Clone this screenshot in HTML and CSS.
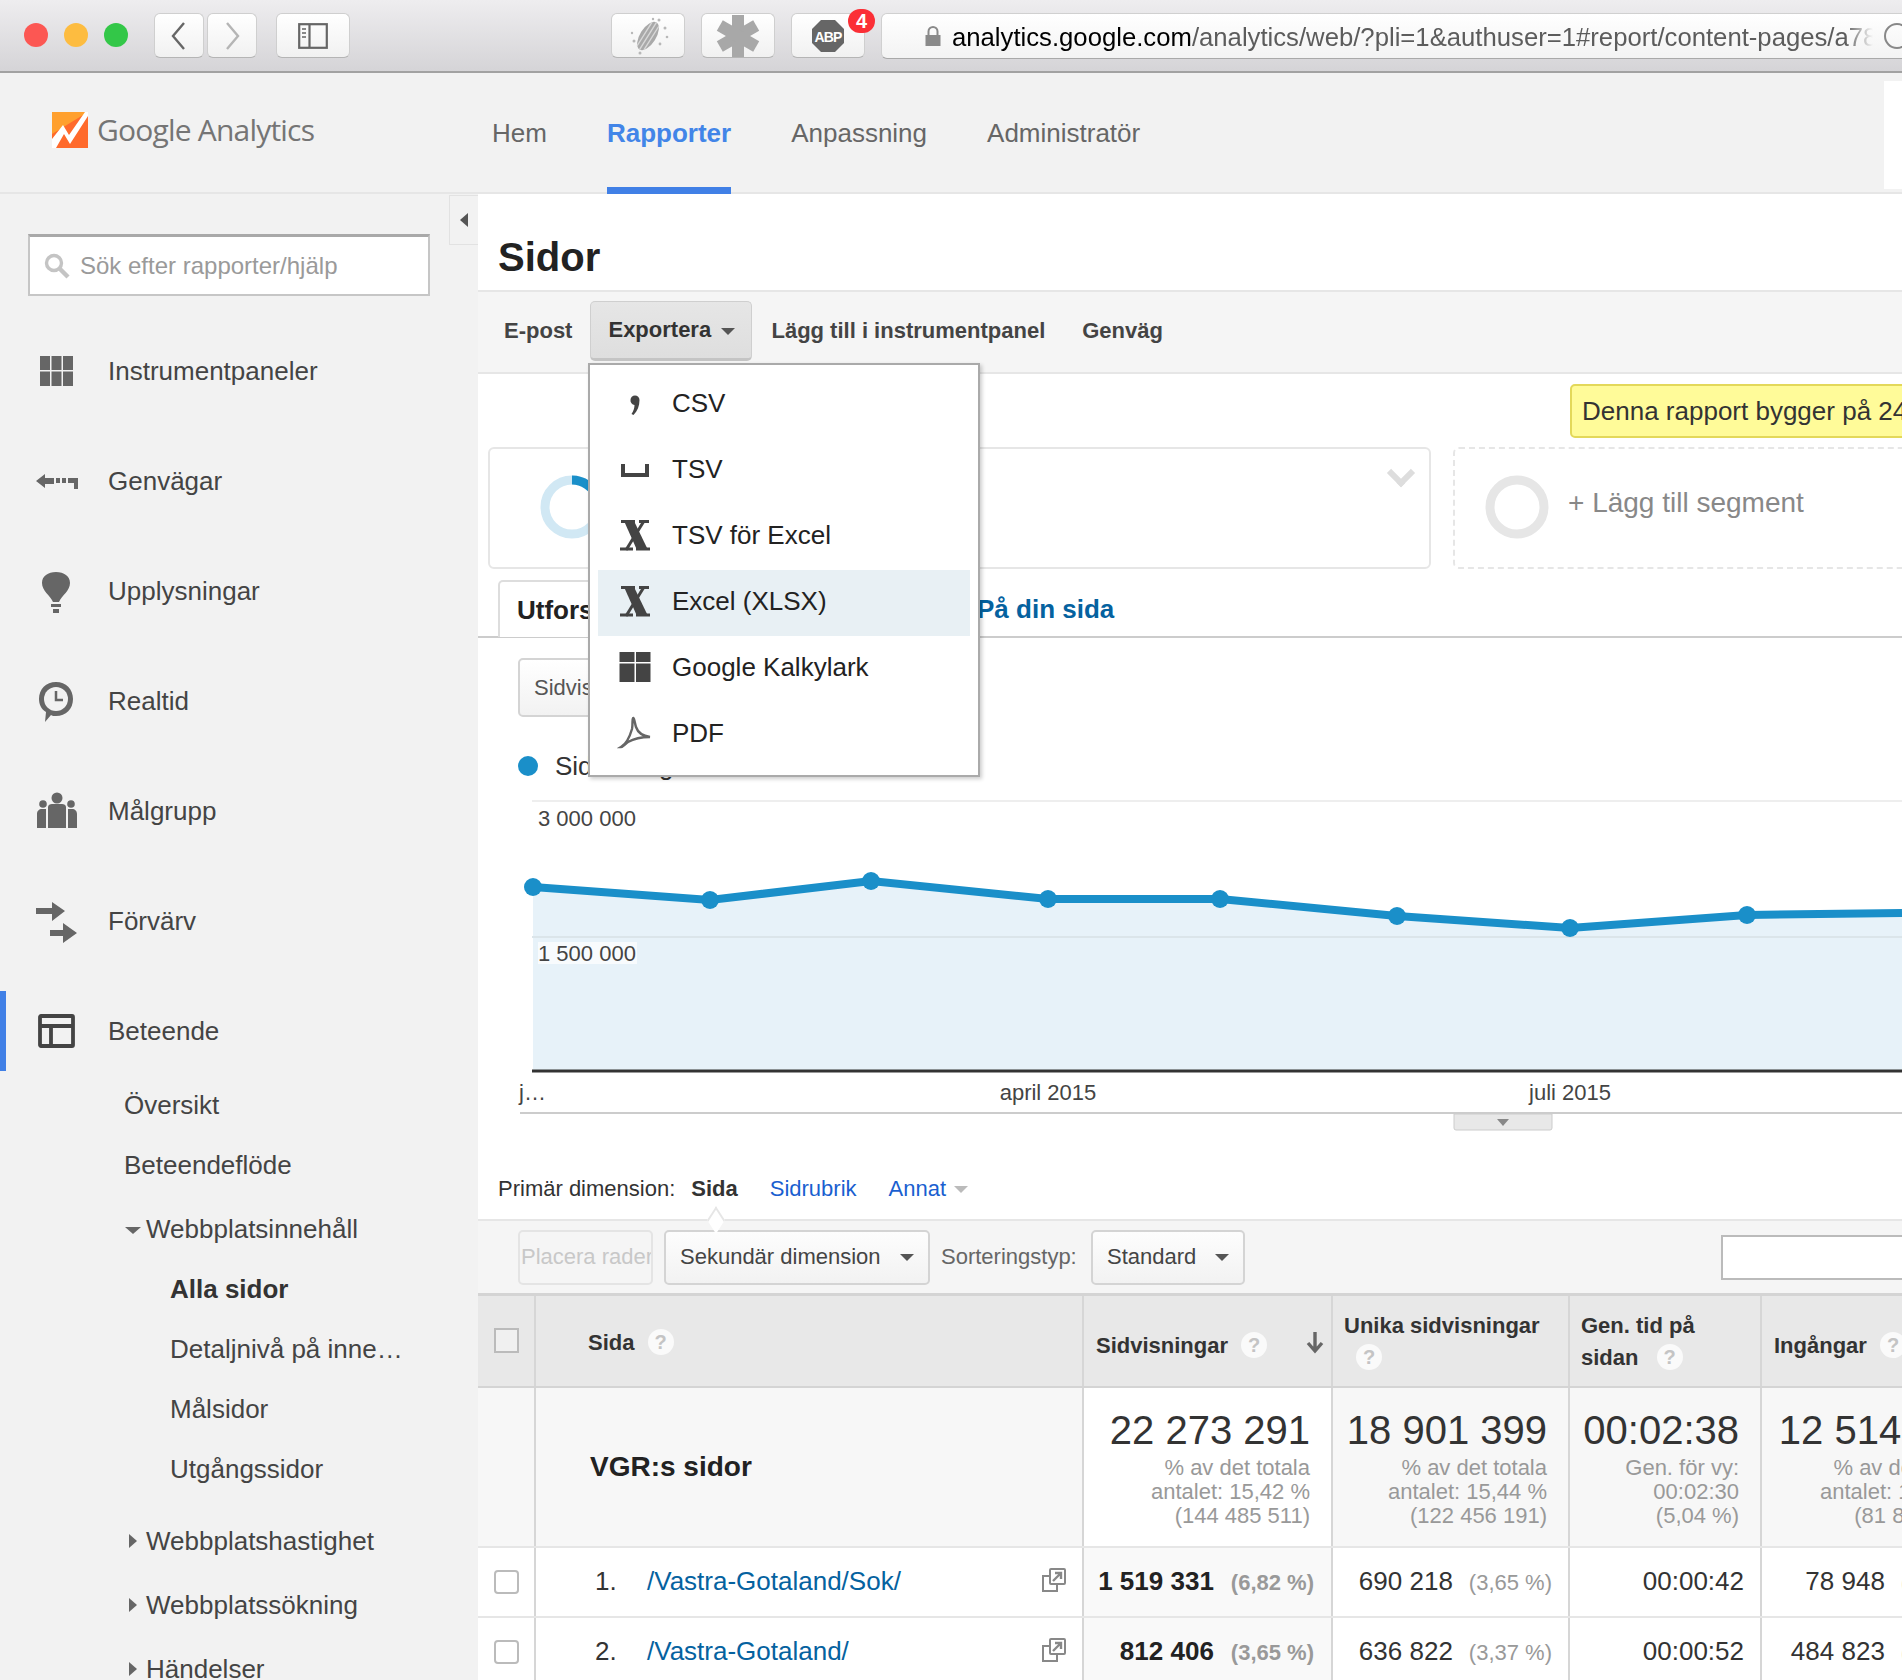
FILE: index.html
```html
<!DOCTYPE html>
<html lang="sv">
<head>
  <meta charset="UTF-8" />
  <title>Sidor - Google Analytics</title>
  <link rel="stylesheet" href="styles.css">
</head>
<body>
  <!-- Browser toolbar -->
  <div class="browser-bar">
    <div class="lights">
      <span class="light red"></span>
      <span class="light yellow"></span>
      <span class="light green"></span>
    </div>
    <div class="nav-btns">
      <div class="tool-btn back"><svg width="20" height="32" viewBox="0 0 20 32"><path d="M15 3 4 16l11 13" fill="none" stroke="#666" stroke-width="2.4"/></svg></div>
      <div class="tool-btn back"><svg width="20" height="32" viewBox="0 0 20 32"><path d="M5 3l11 13L5 29" fill="none" stroke="#b5b5b5" stroke-width="2.4"/></svg></div>
    </div>
    <div class="tool-btn side"><svg width="30" height="26" viewBox="0 0 30 26"><rect x="1.2" y="1.2" width="27.6" height="23.6" fill="none" stroke="#666" stroke-width="2.2"/><path d="M11.5 1v24" stroke="#666" stroke-width="2.2"/><path d="M4 6h4M4 10h4M4 14h4" stroke="#888" stroke-width="2"/></svg></div>
    <div class="ext-btns">
      <div class="tool-btn ext"><svg width="44" height="42" viewBox="0 0 44 42"><g transform="rotate(32 22 21)"><ellipse cx="22" cy="21" rx="8" ry="16" fill="#a9a9a9"/><path d="M18 7v28M22 5v32M26 7v28" stroke="#d8d8d8" stroke-width="1.4"/></g><g fill="#b8b8b8"><circle cx="33" cy="5" r="1.5"/><circle cx="39" cy="13" r="1.5"/><circle cx="41" cy="22" r="1.3"/><circle cx="8" cy="26" r="1.5"/><circle cx="6" cy="18" r="1.2"/><circle cx="14" cy="38" r="1.5"/><circle cx="27" cy="4" r="1.2"/><circle cx="34" cy="29" r="1.4"/></g></svg></div>
      <div class="tool-btn ext"><svg width="44" height="44" viewBox="0 0 44 44"><g fill="#a8a8a8"><rect x="16" y="1" width="12" height="42"/><rect x="16" y="1" width="12" height="42" transform="rotate(60 22 22)"/><rect x="16" y="1" width="12" height="42" transform="rotate(120 22 22)"/></g></svg></div>
      <div class="tool-btn ext abp">
        <svg width="34" height="34" viewBox="0 0 34 34"><path d="M10 1h14l9 9v14l-9 9H10l-9-9V10z" fill="#666"/><text x="17" y="22.5" text-anchor="middle" class="abp-text">ABP</text></svg>
        <span class="badge">4</span>
      </div>
    </div>
    <div class="address">
      <svg class="lock" width="18" height="22" viewBox="0 0 18 22"><path d="M4.5 10V6.500a4.500 4.500 0 0 1 9 0V10" fill="none" stroke="#8a8a8a" stroke-width="2"/><rect x="1.500" y="10" width="15" height="11" fill="#8a8a8a"/></svg>
      <div class="url"><b>analytics.google.com</b>/analytics/web/?pli=1&amp;authuser=1#report/content-pages/a78</div>
      <span class="reload"></span>
    </div>
  </div>

  <!-- GA header -->
  <div class="ga-header">
    <div class="logo">
      <svg width="36" height="36" viewBox="0 0 36 36"><rect width="36" height="36" fill="#ff6a2c"/><path d="M0 0h36L0 22z" fill="#ffa02e"/><path d="M0 27 11 13l6 10L33 0h3v4L18 32l-6-10-8 14H0z" fill="#fff"/></svg>
      <span class="logo-text">Google Analytics</span>
    </div>
    <a class="top-link">Hem</a>
    <a class="top-link active">Rapporter</a>
    <a class="top-link">Anpassning</a>
    <a class="top-link">Administratör</a>
    <div class="account-box"></div>
  </div>

  <div class="layout">
    <!-- Sidebar -->
    <div class="sidebar">
      <div class="collapse-tab"><span></span></div>
      <div class="search">
        <svg width="28" height="28" viewBox="0 0 28 28"><circle cx="11" cy="11" r="7.500" fill="none" stroke="#c4c4c4" stroke-width="3.400"/><path d="M16.500 16.500 25 25" stroke="#c4c4c4" stroke-width="4.400"/></svg>
        <span>Sök efter rapporter/hjälp</span>
      </div>
      <div class="side-nav">
        <div class="side-item"><svg width="44" height="44" viewBox="0 0 44 44" fill="#666"><path d="M6 7h10v14H6zM17.500 7h10v14h-10zM29 7h10v14H29zM6 22.500h10V37H6zM17.500 22.500h10V37h-10zM29 22.500h10V37H29z"/></svg>Instrumentpaneler</div>
        <div class="side-item"><svg width="44" height="44" viewBox="0 0 44 44" fill="#666"><path d="M2 22l9-7v4h9v6h-9v4zM22 19h4v5h-4zM28 19h4v5h-4zM34 19h10v11h-4v-6h-6z"/></svg>Genvägar</div>
        <div class="side-item"><svg width="44" height="44" viewBox="0 0 44 44" fill="#666"><path d="M22 3c8 0 14 4 14 11 0 8-8 12-11 19h-6c-3-7-11-11-11-19C8 7 14 3 22 3zM17 35h10v3H17zM19 40h6v4h-6z"/></svg>Upplysningar</div>
        <div class="side-item"><svg width="44" height="44" viewBox="0 0 44 44"><path d="M22 3c10 0 17 7 17 17s-7 17-17 17c-2 0-4 0-5-1l-6 7 1-10C7 30 5 25 5 20 5 10 12 3 22 3z" fill="#666"/><circle cx="22" cy="20" r="12" fill="#f2f2f2"/><path d="M22 12v9h7" fill="none" stroke="#666" stroke-width="2.500"/></svg>Realtid</div>
        <div class="side-item"><svg width="44" height="44" viewBox="0 0 44 44" fill="#666"><circle cx="23" cy="9" r="5.500"/><circle cx="9" cy="15" r="3.800"/><circle cx="37" cy="15" r="3.800"/><path d="M14 18c0-2 2-3 4-3h10c2 0 4 1 4 3v21H14zM3 25c0-3 2-5 5-5h4v19H3zM34 20h4c3 0 5 2 5 5v14h-9z"/></svg>Målgrupp</div>
        <div class="side-item"><svg width="44" height="44" viewBox="0 0 44 44" fill="#666"><path d="M2 9h16V3l13 9-13 10v-7H2zM16 31h13v-7l14 10-14 10v-7H16z"/></svg>Förvärv</div>
        <div class="side-item current"><svg width="44" height="44" viewBox="0 0 44 44" fill="none" stroke="#444" stroke-width="3.800"><rect x="6" y="7" width="33" height="30" rx="1"/><path d="M6 17h33M17 17v20"/></svg>Beteende</div>
      </div>
      <div class="sub-nav">
        <div class="sub-item">Översikt</div>
        <div class="sub-item">Beteendeflöde</div>
        <div class="sub-item tree open">Webbplatsinnehåll</div>
        <div class="sub-item deep selected">Alla sidor</div>
        <div class="sub-item deep">Detaljnivå på inne…</div>
        <div class="sub-item deep">Målsidor</div>
        <div class="sub-item deep">Utgångssidor</div>
        <div class="sub-item tree closed gap-big">Webbplatshastighet</div>
        <div class="sub-item tree closed">Webbplatssökning</div>
        <div class="sub-item tree closed">Händelser</div>
      </div>
    </div>

    <!-- Report -->
    <div class="main">
      <h1>Sidor</h1>
      <div class="actions">
        <a>E-post</a>
        <a class="export">Exportera <i class="caret"></i></a>
        <a>Lägg till i instrumentpanel</a>
        <a>Genväg</a>
      </div>

      <div class="export-menu">
        <div class="menu-row"><svg width="36" height="36" viewBox="0 0 36 36" fill="#444"><path d="M13.500 15a4.500 4.500 0 0 1 9 0c0 6-2 11-6 15l-2-1c2-3 3-6 3-9a4.500 4.500 0 0 1-4-5z"/></svg>CSV</div>
        <div class="menu-row"><svg width="36" height="36" viewBox="0 0 36 36" fill="none" stroke="#444" stroke-width="4"><path d="M6 13v11h24V13"/></svg>TSV</div>
        <div class="menu-row"><svg width="36" height="36" viewBox="0 0 36 36"><path d="M7 4h10l14 29H20z" fill="#444"/><path d="M27 4 9 33" stroke="#444" stroke-width="3"/><path d="M4 4.500h14M22 4.500h10M3 32h13M19 32h14" stroke="#444" stroke-width="3"/></svg>TSV för Excel</div>
        <div class="menu-row hover"><svg width="36" height="36" viewBox="0 0 36 36"><path d="M7 4h10l14 29H20z" fill="#444"/><path d="M27 4 9 33" stroke="#444" stroke-width="3"/><path d="M4 4.500h14M22 4.500h10M3 32h13M19 32h14" stroke="#444" stroke-width="3"/></svg>Excel (XLSX)</div>
        <div class="menu-row"><svg width="36" height="36" viewBox="0 0 36 36" fill="#444"><path d="M2.500 3h15v10h-15zM19 3h14.500v10H19zM2.500 14.500h15V33h-15zM19 14.500h14.500V33H19z"/></svg>Google Kalkylark</div>
        <div class="menu-row"><svg width="36" height="36" viewBox="0 0 36 36" fill="none" stroke="#666" stroke-width="2.400"><path d="M4 32c5-3 9-11 11-18 1-5 0-10 1-11s2 6 3 9c2 6 7 9 14 10-7 0-15 1-22 5-3 2-5 5-7 5z"/></svg>PDF</div>
      </div>

      <div class="notice-row"><div class="notice">Denna rapport bygger på 24,99 % av sessionerna</div></div>

      <div class="segments">
        <div class="segment">
          <svg width="64" height="64" viewBox="0 0 64 64"><circle cx="32" cy="32" r="27" fill="none" stroke="#d1e8f4" stroke-width="9"/><path d="M32 5A27 27 0 0 1 57 22" fill="none" stroke="#1a8fc9" stroke-width="9"/></svg>
          <span class="chevron"></span>
        </div>
        <div class="segment add">
          <svg width="64" height="64" viewBox="0 0 64 64"><circle cx="32" cy="32" r="27" fill="none" stroke="#e6e6e6" stroke-width="9"/></svg>
          <span>+ Lägg till segment</span>
        </div>
      </div>

      <div class="tabs">
        <div class="tab">Utforskare</div>
        <a class="tab-link">På din sida</a>
      </div>

      <div class="metric-row"><div class="metric-btn">Sidvisningar</div></div>
      <div class="legend"><span class="dot"></span>Sidvisningar</div>

      <svg class="chart" width="1424" height="345" viewBox="0 0 1424 345">
        <path d="M54 11H1424" stroke="#eee" stroke-width="2"/>
        <path d="M55 97 232 110 393 91 570 109 742 109 919 126 1092 138 1269 125 1424 123V281H55z" fill="#e7f2f9"/>
        <path d="M54 147H1424" stroke="#dbe5ea" stroke-width="2"/>
        <path d="M54 281H1424" stroke="#333" stroke-width="3"/>
        <path d="M42 323H1424" stroke="#ccc" stroke-width="2"/>
        <path d="M55 97 232 110 393 91 570 109 742 109 919 126 1092 138 1269 125 1424 123" fill="none" stroke="#1a8fc9" stroke-width="8"/>
        <g fill="#1a8fc9">
          <circle cx="55" cy="97" r="9"/><circle cx="232" cy="110" r="9"/><circle cx="393" cy="91" r="9"/>
          <circle cx="570" cy="109" r="9"/><circle cx="742" cy="109" r="9"/><circle cx="919" cy="126" r="9"/>
          <circle cx="1092" cy="138" r="9"/><circle cx="1269" cy="125" r="9"/>
        </g>
        <g class="chart-label">
          <text x="60" y="36">3 000 000</text>
          <rect x="60" y="152" width="99" height="22" fill="#fff" opacity=".7"/>
          <text x="60" y="171">1 500 000</text>
          <text x="41" y="310">j…</text>
          <text x="570" y="310" text-anchor="middle">april 2015</text>
          <text x="1092" y="310" text-anchor="middle">juli 2015</text>
        </g>
        <path d="M976 324h98v14a2 2 0 0 1-2 2h-94a2 2 0 0 1-2-2z" fill="#e8e8e8" stroke="#ccc"/>
        <path d="M1019 329h12l-6 7z" fill="#888"/>
      </svg>

      <div class="dimension-row">
        <span class="dim-label">Primär dimension:</span>
        <b>Sida</b>
        <a>Sidrubrik</a>
        <a>Annat</a><i class="caret light-caret"></i>
      </div>

      <div class="table-tools">
        <span class="notch"></span>
        <div class="select disabled">Placera rader</div>
        <div class="select second">Sekundär dimension <i class="caret dark-caret"></i></div>
        <span class="sort-label">Sorteringstyp:</span>
        <div class="select sort">Standard <i class="caret dark-caret"></i></div>
        <div class="table-search"></div>
      </div>

      <table class="report">
        <colgroup>
          <col class="c-check"><col class="c-page"><col class="c-views"><col class="c-unique"><col class="c-time"><col class="c-entry">
        </colgroup>
        <tr class="head">
          <th><span class="box"></span></th>
          <th class="page-head">Sida <span class="help">?</span></th>
          <th class="low">Sidvisningar <span class="help">?</span><svg class="sort-arrow" width="20" height="24" viewBox="0 0 20 24"><path d="M10 2v18M3 13l7 8 7-8" fill="none" stroke="#666" stroke-width="3.400"/></svg></th>
          <th class="top">Unika sidvisningar<br><span class="help">?</span></th>
          <th class="top">Gen. tid på<br>sidan <span class="help">?</span></th>
          <th class="low">Ingångar <span class="help">?</span></th>
        </tr>
        <tr class="total">
          <td></td>
          <td class="total-name">VGR:s sidor</td>
          <td class="sorted"><div class="big">22 273 291</div><div class="sub">% av det totala<br>antalet: 15,42 %<br>(144 485 511)</div></td>
          <td><div class="big">18 901 399</div><div class="sub">% av det totala<br>antalet: 15,44 %<br>(122 456 191)</div></td>
          <td><div class="big">00:02:38</div><div class="sub">Gen. för vy:<br>00:02:30<br>(5,04 %)</div></td>
          <td><div class="big">12 514 880</div><div class="sub">% av det totala<br>antalet: 15,29 %<br>(81 834 512)</div></td>
        </tr>
        <tr class="row">
          <td><span class="box round"></span></td>
          <td class="page-td"><div class="page-cell"><span class="idx">1.</span><a>/Vastra-Gotaland/Sok/</a><svg width="26" height="26" viewBox="0 0 26 26" fill="none" stroke="#888" stroke-width="2"><rect x="9" y="2" width="15" height="15" rx="1"/><path d="M8 9H2v15h14v-6"/><path d="M12 14l8-8M14 6h6v6" stroke-width="2.400"/></svg></div></td>
          <td class="sorted"><b>1 519 331</b><span class="pct strong">(6,82 %)</span></td>
          <td>690 218<span class="pct">(3,65 %)</span></td>
          <td>00:00:42</td>
          <td>78 948<span class="pct">(0,63 %)</span></td>
        </tr>
        <tr class="row">
          <td><span class="box round"></span></td>
          <td class="page-td"><div class="page-cell"><span class="idx">2.</span><a>/Vastra-Gotaland/</a><svg width="26" height="26" viewBox="0 0 26 26" fill="none" stroke="#888" stroke-width="2"><rect x="9" y="2" width="15" height="15" rx="1"/><path d="M8 9H2v15h14v-6"/><path d="M12 14l8-8M14 6h6v6" stroke-width="2.400"/></svg></div></td>
          <td class="sorted"><b>812 406</b><span class="pct strong">(3,65 %)</span></td>
          <td>636 822<span class="pct">(3,37 %)</span></td>
          <td>00:00:52</td>
          <td>484 823<span class="pct">(3,87 %)</span></td>
        </tr>
      </table>
    </div>
  </div>
</body>
</html>
```
FILE: styles.css
```css
html, body {
  margin: 0;
  height: 1680px;
  overflow: hidden;
}
body {
  font-family: "Liberation Sans", Arial, sans-serif;
  background-color: #fff;
  color: #333;
}
a {
  color: inherit;
}

/* browser toolbar */
.browser-bar {
  height: 71px;
  display: flex;
  align-items: flex-start;
  background: linear-gradient(#eeedef, #d5d4d7);
  border-bottom: 2px solid #a2a2a2;
  overflow: hidden;
}
.lights {
  display: flex;
  gap: 16px;
  flex-shrink: 0;
  margin: 23px 0 0 24px;
}
.light {
  width: 24px;
  height: 24px;
  border-radius: 50%;
}
.light.red { background-color: #fc5753; }
.light.yellow { background-color: #fdbc40; }
.light.green { background-color: #33c748; }
.tool-btn {
  height: 45px;
  flex-shrink: 0;
  display: flex;
  align-items: center;
  justify-content: center;
  background: linear-gradient(#fff, #f1f1f1);
  border: 1px solid #cfcfcf;
  border-bottom-color: #b5b5b5;
  border-radius: 6px;
  box-sizing: border-box;
}
.nav-btns {
  display: flex;
  gap: 3px;
  flex-shrink: 0;
  margin: 13px 0 0 26px;
}
.tool-btn.back { width: 50px; }
.tool-btn.side {
  width: 74px;
  margin: 13px 0 0 19px;
}
.ext-btns {
  display: flex;
  gap: 16px;
  flex-shrink: 0;
  margin: 13px 0 0 261px;
}
.tool-btn.ext {
  width: 74px;
  position: relative;
}
.abp-text {
  font-size: 14px;
  font-weight: bold;
  letter-spacing: -0.8px;
  fill: #fff;
}
.badge {
  position: absolute;
  top: -5px;
  right: -11px;
  width: 27px;
  height: 24px;
  border-radius: 12px;
  background-color: #fb2f36;
  color: #fff;
  font-size: 20px;
  font-weight: bold;
  line-height: 24px;
  text-align: center;
}
.address {
  width: 1040px;
  height: 46px;
  flex-shrink: 0;
  margin: 13px 0 0 16px;
  box-sizing: border-box;
  display: flex;
  align-items: center;
  background: linear-gradient(#fff, #f3f3f3);
  border: 1px solid #d0d0d0;
  border-bottom-color: #a9a9a9;
  border-radius: 6px 0 0 6px;
}
.lock {
  margin-left: 42px;
  flex-shrink: 0;
}
.url {
  width: 921px;
  flex-shrink: 0;
  margin: 2px 0 0 10px;
  font-size: 25.7px;
  color: #5c5c5c;
  white-space: nowrap;
  overflow: hidden;
  mask-image: linear-gradient(to right, #000 97%, transparent);
}
.url b {
  font-weight: normal;
  color: #000;
}
.reload {
  width: 22px;
  height: 22px;
  margin-left: 11px;
  border: 2px solid #888;
  border-radius: 50%;
  flex-shrink: 0;
}

/* analytics header */
.ga-header {
  height: 119px;
  display: flex;
  align-items: center;
  position: relative;
  background-color: #f2f2f2;
  border-bottom: 2px solid #e6e6e6;
  font-size: 26px;
  color: #666;
}
.logo {
  width: 492px;
  padding-left: 52px;
  box-sizing: border-box;
  display: flex;
  align-items: center;
  gap: 9px;
  margin-top: -6px;
}
.logo-text {
  font-family: "Open Sans", sans-serif;
  font-size: 30px;
  letter-spacing: -0.8px;
  color: #757575;
  white-space: nowrap;
}
.top-link {
  margin: 2px 60px 0 0;
}
.top-link.active {
  color: #4285e8;
  font-weight: bold;
  height: 117px;
  line-height: 117px;
  position: relative;
}
.top-link.active::after {
  content: "";
  position: absolute;
  left: 0;
  right: 0;
  bottom: -2px;
  height: 7px;
  background-color: #4180e6;
}
.account-box {
  position: absolute;
  right: 0;
  top: 8px;
  width: 18px;
  height: 108px;
  background-color: #fff;
}

/* page split */
.layout {
  display: flex;
  height: 1486px;
  overflow: hidden;
}
.sidebar {
  width: 478px;
  flex-shrink: 0;
  position: relative;
  background-color: #f2f2f2;
  box-sizing: border-box;
  padding-top: 40px;
  color: #444;
}
.collapse-tab {
  position: absolute;
  top: 1px;
  right: 0;
  width: 29px;
  height: 50px;
  box-sizing: border-box;
  background-color: #f2f2f2;
  border: 1px solid #e2e2e2;
  border-right: none;
  display: flex;
  align-items: center;
  justify-content: center;
}
.collapse-tab span {
  border-style: solid;
  border-width: 7px 8px 7px 0;
  border-color: transparent #555 transparent transparent;
}
.search {
  width: 402px;
  height: 62px;
  margin-left: 28px;
  box-sizing: border-box;
  display: flex;
  align-items: center;
  gap: 9px;
  padding-left: 13px;
  background-color: #fff;
  border: 2px solid #c6c6c6;
  border-top: 3px solid #a9a9a9;
  font-size: 24px;
  color: #9a9a9a;
}
.side-nav {
  margin-top: 35px;
}
.side-item {
  height: 80px;
  margin-bottom: 30px;
  padding-left: 34px;
  display: flex;
  align-items: center;
  gap: 30px;
  font-size: 26px;
  position: relative;
}
.side-item.current {
  margin-bottom: 4px;
}
.side-item.current::before {
  content: "";
  position: absolute;
  left: 0;
  top: 0;
  width: 6px;
  height: 80px;
  background-color: #4180e6;
}
.sub-item {
  height: 60px;
  line-height: 60px;
  padding-left: 124px;
  font-size: 26px;
  white-space: nowrap;
  position: relative;
}
.sub-item.tree {
  padding-left: 146px;
  margin-top: 4px;
}
.sub-item.gap-big {
  margin-top: 12px;
}
.sub-item.deep {
  padding-left: 170px;
}
.sub-item.selected {
  font-weight: bold;
  color: #333;
}
.sub-item.open::before {
  content: "";
  position: absolute;
  left: 125px;
  top: 28px;
  border-style: solid;
  border-width: 7px 8px 0;
  border-color: #666 transparent transparent;
}
.sub-item.closed::before {
  content: "";
  position: absolute;
  left: 129px;
  top: 23px;
  border-style: solid;
  border-width: 7px 0 7px 8px;
  border-color: transparent transparent transparent #666;
}

/* report area */
.main {
  flex: 1;
  min-width: 0;
  position: relative;
  overflow: hidden;
}
h1 {
  margin: 0;
  height: 59px;
  padding: 37px 0 0 20px;
  font-size: 40px;
  line-height: 52px;
  color: #222;
  border-bottom: 2px solid #e6e6e6;
}
.actions {
  height: 78px;
  padding: 0 0 2px 26px;
  display: flex;
  align-items: center;
  background-color: #f5f5f5;
  border-bottom: 2px solid #e6e6e6;
  font-size: 22px;
  font-weight: bold;
  color: #444;
}
.actions a {
  margin-right: 37px;
}
.actions .export {
  height: 60px;
  width: 162px;
  margin: 0 19px 0 -19px;
  padding-left: 17px;
  box-sizing: border-box;
  color: #333;
  background: linear-gradient(#e6e6e6, #dedede);
  border: 1px solid #cfcfcf;
  border-bottom: 3px solid #c4c4c4;
  border-radius: 5px;
  line-height: 56px;
}
.caret {
  display: inline-block;
  margin-left: 4px;
  vertical-align: middle;
  border-style: solid;
  border-width: 7px 7px 0;
  border-color: #555 transparent transparent;
}
.export-menu {
  position: absolute;
  left: 110px;
  top: 169px;
  width: 392px;
  height: 414px;
  box-sizing: border-box;
  padding: 7px 8px 0;
  background-color: #fff;
  border: 2px solid #aaa;
  box-shadow: 2px 2px 4px rgba(0,0,0,0.2);
  z-index: 5;
  font-size: 26px;
  color: #222;
}
.menu-row {
  height: 66px;
  box-sizing: border-box;
  display: flex;
  align-items: center;
  gap: 19px;
  padding: 0 0 4px 19px;
}
.menu-row.hover {
  background-color: #e8f0f4;
}
.notice-row {
  padding: 10px 0 0 1092px;
}
.notice {
  width: 600px;
  height: 54px;
  box-sizing: border-box;
  padding-left: 10px;
  line-height: 50px;
  font-size: 26px;
  color: #333;
  white-space: nowrap;
  background-color: #fffb99;
  border: 2px solid #e3d85a;
  border-radius: 5px;
}
.segments {
  display: flex;
  gap: 22px;
  margin: 9px 0 0 10px;
}
.segment {
  width: 943px;
  height: 122px;
  flex-shrink: 0;
  box-sizing: border-box;
  display: flex;
  align-items: center;
  padding-left: 50px;
  border: 2px solid #e6e6e6;
  border-radius: 6px;
}
.segment svg {
  margin-top: -3px;
}
.segment.add {
  width: 600px;
  padding-left: 30px;
  border: 2px dashed #e6e6e6;
  font-size: 28px;
  color: #888;
}
.segment.add span {
  margin: -10px 0 0 19px;
}
.chevron {
  width: 20px;
  height: 20px;
  margin: -70px 18px 0 auto;
  box-sizing: border-box;
  border-right: 6px solid #ddd;
  border-bottom: 6px solid #ddd;
  transform: rotate(45deg);
}
.tabs {
  height: 56px;
  margin-top: 11px;
  display: flex;
  border-bottom: 2px solid #ccc;
  font-size: 26px;
  font-weight: bold;
}
.tab {
  width: 300px;
  height: 57px;
  margin-left: 20px;
  padding-left: 17px;
  box-sizing: border-box;
  line-height: 57px;
  color: #222;
  background-color: #fff;
  border: 2px solid #ddd;
  border-bottom: none;
  border-radius: 5px 5px 0 0;
}
.tab-link {
  margin-left: 179px;
  line-height: 58px;
  color: #05629f;
}
.metric-row {
  padding: 20px 0 0 40px;
}
.metric-btn {
  width: 200px;
  height: 59px;
  box-sizing: border-box;
  padding-left: 14px;
  line-height: 55px;
  font-size: 22px;
  color: #555;
  background: linear-gradient(#fff, #f2f2f2);
  border: 2px solid #d4d4d4;
  border-radius: 5px;
}
.legend {
  display: flex;
  align-items: center;
  gap: 17px;
  height: 30px;
  margin: 34px 0 0 40px;
  font-size: 26px;
  color: #333;
}
.dot {
  width: 20px;
  height: 20px;
  border-radius: 50%;
  background-color: #1a8fc9;
}
.chart {
  display: block;
  margin-top: 9px;
}
.chart-label text {
  font-size: 22px;
  fill: #444;
}

/* dimension switch + table tools */
.dimension-row {
  height: 30px;
  margin-top: 39px;
  padding-left: 20px;
  display: flex;
  align-items: center;
  font-size: 22px;
  color: #333;
}
.dimension-row b {
  margin-left: 16px;
}
.dimension-row a {
  margin-left: 32px;
  color: #1a5fd0;
}
.light-caret {
  margin-left: 8px;
  border-color: #bbb transparent transparent;
}
.table-tools {
  height: 72px;
  margin-top: 15px;
  display: flex;
  align-items: center;
  position: relative;
  padding-left: 40px;
  background-color: #f5f5f5;
  border-top: 2px solid #e6e6e6;
  font-size: 22px;
}
.notch {
  position: absolute;
  left: 230px;
  top: -9px;
  width: 14px;
  height: 14px;
  background-color: #fff;
  border-top: 2px solid #e6e6e6;
  border-left: 2px solid #e6e6e6;
  transform: rotate(45deg) skew(12deg, 12deg);
}
.select {
  height: 55px;
  flex-shrink: 0;
  box-sizing: border-box;
  line-height: 50px;
  padding-left: 14px;
  color: #444;
  background: linear-gradient(#fdfdfd, #f2f2f2);
  border: 2px solid #d4d4d4;
  border-radius: 5px;
  white-space: nowrap;
}
.select.disabled {
  width: 135px;
  padding-left: 1px;
  color: #c8c8c8;
  background: #f5f5f5;
  border-color: #e4e4e4;
  overflow: hidden;
}
.select.second {
  width: 266px;
  margin-left: 11px;
}
.select.sort {
  width: 154px;
}
.dark-caret {
  margin-left: 13px;
  border-width: 7px 7px 0;
}
.sort-label {
  width: 150px;
  flex-shrink: 0;
  margin-left: 11px;
  color: #666;
  white-space: nowrap;
}
.table-search {
  width: 300px;
  height: 45px;
  flex-shrink: 0;
  margin-left: 476px;
  box-sizing: border-box;
  background-color: #fff;
  border: 2px solid #bbb;
}

/* table */
.report {
  table-layout: fixed;
  width: 1523px;
  border-collapse: collapse;
  border-top: 3px solid #d4d4d4;
}
.c-check { width: 57px; }
.c-page { width: 548px; }
.c-views { width: 249px; }
.c-unique { width: 237px; }
.c-time { width: 192px; }
.c-entry { width: 240px; }
.report th, .report td {
  padding: 0;
  border-right: 2px solid #d6d6d6;
  border-bottom: 2px solid #e6e6e6;
}
.head {
  height: 92px;
}
.head th {
  position: relative;
  padding: 0 0 0 12px;
  text-align: left;
  font-size: 22px;
  line-height: 32px;
  color: #333;
  background-color: #e8e8e8;
  border-bottom-color: #d4d4d4;
}
.head th:first-child {
  padding-left: 16px;
}
.head th.page-head {
  padding: 4px 0 0 52px;
}
.head th.low {
  padding-top: 11px;
}
.head th.top {
  padding-top: 2px;
  padding-left: 11px;
}
.box {
  display: block;
  width: 25px;
  height: 25px;
  box-sizing: border-box;
  background-color: #f0f0f0;
  border: 2px solid #bbb;
}
.box.round {
  height: 24px;
  margin-left: 16px;
  background-color: #fff;
  border-radius: 4px;
}
.help {
  display: inline-block;
  width: 26px;
  height: 26px;
  margin-left: 7px;
  border-radius: 50%;
  background-color: #fafafa;
  color: #c4c4c4;
  font-size: 20px;
  font-weight: bold;
  line-height: 26px;
  text-align: center;
  vertical-align: 1px;
}
.top br + .help {
  margin-left: 12px;
}
.sort-arrow {
  position: absolute;
  right: 6px;
  top: 34px;
}
.total {
  height: 160px;
}
.total td {
  background-color: #f7f7f7;
  text-align: right;
  padding: 1px 21px 0 0;
}
.total td.sorted {
  background-color: #fff;
}
.total td.total-name {
  padding: 0 0 0 54px;
  text-align: left;
  font-size: 28px;
  font-weight: bold;
  color: #222;
}
.big {
  font-size: 40px;
  line-height: 46px;
  color: #333;
  white-space: nowrap;
}
.sub {
  margin-top: 3px;
  font-size: 22px;
  line-height: 24px;
  color: #999;
  white-space: nowrap;
}
.row {
  height: 70px;
}
.row td {
  text-align: right;
  padding-right: 16px;
  font-size: 26px;
  color: #333;
  white-space: nowrap;
}
.row td:first-child {
  padding-right: 0;
}
.row td.page-td {
  padding-right: 15px;
}
.row td.sorted {
  padding-right: 17px;
  background-color: #f9f9f9;
}
.row td b {
  color: #222;
}
.pct {
  margin-left: 16px;
  font-size: 22px;
  color: #999;
}
.pct.strong {
  margin-left: 17px;
  font-weight: bold;
}
.page-cell {
  display: flex;
  align-items: center;
  text-align: left;
  padding-left: 59px;
}
.page-cell a {
  color: #05629f;
}
.page-cell svg {
  margin: -4px 0 0 auto;
}
.idx {
  width: 52px;
}
```
